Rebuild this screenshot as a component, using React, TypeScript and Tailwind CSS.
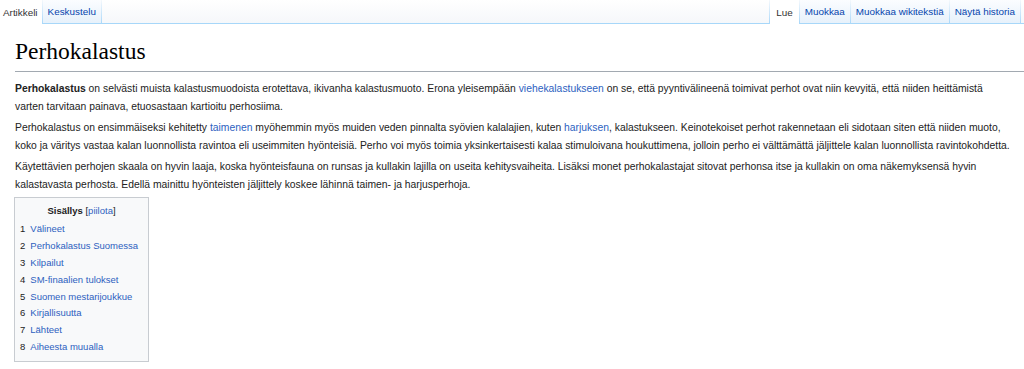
const tocItems = [
  'Välineet',
  'Perhokalastus Suomessa',
  'Kilpailut',
  'SM-finaalien tulokset',
  'Suomen mestarijoukkue',
  'Kirjallisuutta',
  'Lähteet',
  'Aiheesta muualla',
];

const Tab = ({ label, selected, first }: { label: string; selected?: boolean; first?: boolean }) => (
  <div
    className={
      selected
        ? first
          ? 'flex h-full items-center bg-white pl-[3px] pr-[4px] pt-[2px] text-[#333]'
          : 'flex h-full items-center bg-white px-[6px] pt-[2px] text-[#333]'
        : 'flex h-full items-center border-b border-[#a7d7f9] bg-gradient-to-b from-[#fbfdff] to-[#e7f1fb] px-[5px] pt-[2px] text-[#0645ad]'
    }
  >
    {label}
  </div>
);

const Sep = () => <div className="h-full w-px bg-gradient-to-b from-[#f4f8fc] to-[#a7d7f9]" />;

const Link = ({ children }: { children: string }) => <a className="text-[#2d5fbf]">{children}</a>;

export default function App() {
  return (
    <div className="h-[369px] w-[1024px] overflow-hidden bg-white font-['Liberation_Sans',Arial,sans-serif] text-[#222]">
      <header className="flex h-[24px] items-stretch bg-gradient-to-b from-white to-[#f5f7fa] text-[9.9px]">
        <div className="flex">
          <Tab label="Artikkeli" selected first />
          <Sep />
          <Tab label="Keskustelu" />
          <Sep />
        </div>
        <div className="flex-1 border-b border-[#a7d7f9]" />
        <div className="flex">
          <Sep />
          <Tab label="Lue" selected />
          <Sep />
          <Tab label="Muokkaa" />
          <Sep />
          <Tab label="Muokkaa wikitekstiä" />
          <Sep />
          <Tab label="Näytä historia" />
          <Sep />
          <div className="w-[3px] border-b border-[#a7d7f9]" />
        </div>
      </header>

      <main className="pl-[15px] pr-[8px]">
        <h1 className="-mr-[8px] mt-[13px] border-b border-[#a2a9b1] pb-[6px] font-['Liberation_Serif',Georgia,serif] text-[23.5px] leading-[28px] text-black">
          Perhokalastus
        </h1>

        <div className="mt-[8px] whitespace-nowrap text-[10.35px] leading-[18px]">
          <p className="mb-[3px]">
            <b>Perhokalastus</b> on selvästi muista kalastusmuodoista erotettava, ikivanha kalastusmuoto. Erona yleisempään{' '}
            <Link>viehekalastukseen</Link> on se, että pyyntivälineenä toimivat perhot ovat niin kevyitä, että niiden heittämistä
            <br />
            varten tarvitaan painava, etuosastaan kartioitu perhosiima.
          </p>
          <p className="mb-[3px]">
            Perhokalastus on ensimmäiseksi kehitetty <Link>taimenen</Link> myöhemmin myös muiden veden pinnalta syövien kalalajien,
            kuten <Link>harjuksen</Link>, kalastukseen. Keinotekoiset perhot rakennetaan eli sidotaan siten että niiden muoto,
            <br />
            koko ja väritys vastaa kalan luonnollista ravintoa eli useimmiten hyönteisiä. Perho voi myös toimia yksinkertaisesti kalaa
            stimuloivana houkuttimena, jolloin perho ei välttämättä jäljittele kalan luonnollista ravintokohdetta.
          </p>
          <p>
            Käytettävien perhojen skaala on hyvin laaja, koska hyönteisfauna on runsas ja kullakin lajilla on useita kehitysvaiheita.
            Lisäksi monet perhokalastajat sitovat perhonsa itse ja kullakin on oma näkemyksensä hyvin
            <br />
            kalastavasta perhosta. Edellä mainittu hyönteisten jäljittely koskee lähinnä taimen- ja harjusperhoja.
          </p>
        </div>

        <div className="mt-[3px] -ml-px inline-block border border-[#c8ccd1] bg-[#f8f9fa] px-[5px] pb-[5px] pt-[5px] text-[9.5px] leading-[16.9px]">
          <div className="mb-[1px] text-center">
            <b className="text-[#222]">Sisällys</b> <span className="text-[#222]">[</span>
            <Link>piilota</Link>
            <span className="text-[#222]">]</span>
          </div>
          <ul>
            {tocItems.map((t, i) => (
              <li key={t} className="flex gap-[5px] pr-[5px]">
                <span className="text-[#222]">{i + 1}</span>
                <Link>{t}</Link>
              </li>
            ))}
          </ul>
        </div>
      </main>
    </div>
  );
}
